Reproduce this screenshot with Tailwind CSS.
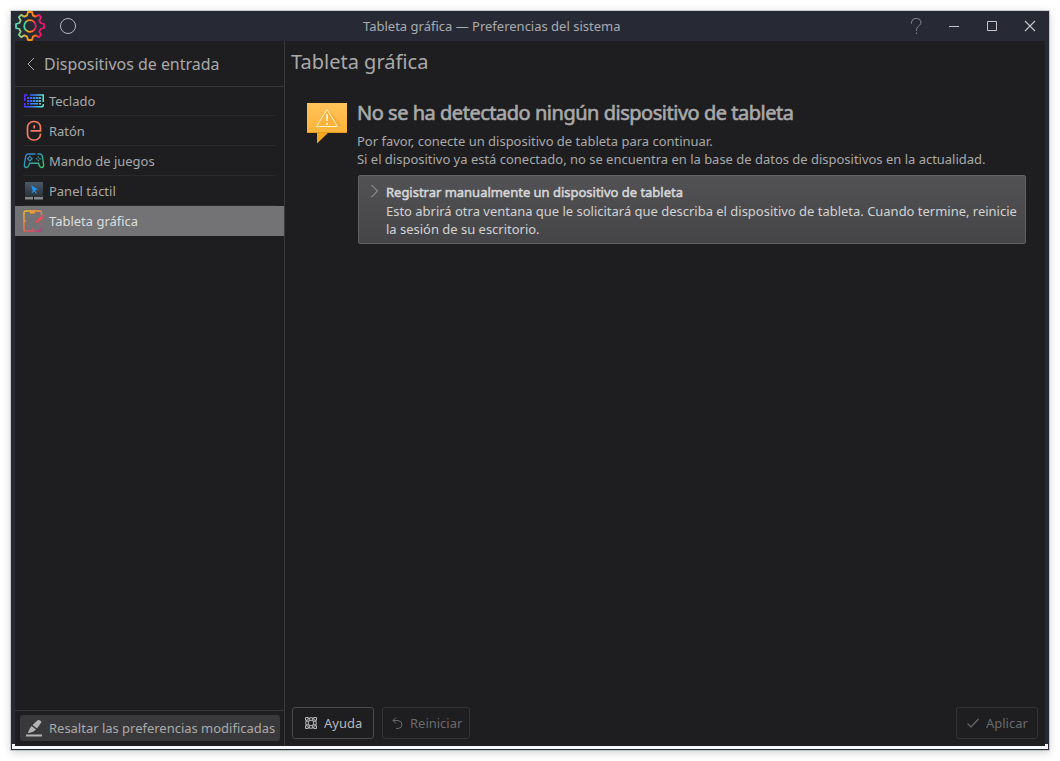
<!DOCTYPE html>
<html lang="es">
<head>
<meta charset="utf-8">
<title>Tableta gráfica — Preferencias del sistema</title>
<script src="https://cdn.jsdelivr.net/npm/@tailwindcss/browser@4"></script>
</head>
<body class="w-[1060px] h-[761px] overflow-hidden bg-white p-[11px] font-['Noto_Sans',sans-serif] text-[12.98px] leading-[18px] text-[#a9a9aa]">
<div class="w-[1038px] h-[739px] flex flex-col bg-[#272a34] shadow-[0_2px_9px_0_rgba(0,0,0,0.2),0_0_0_1px_#d3dcda] whitespace-nowrap">
  <header class="h-[30px] shrink-0 flex items-center">
    <svg class="ml-1 w-[30px] h-[30px]" viewBox="0 0 30 30" fill="none" stroke="url(#gear)" stroke-width="1.8">
      <defs><linearGradient id="gear" gradientUnits="userSpaceOnUse" x1="0" y1="15" x2="30" y2="15"><stop offset="0" stop-color="#35e0c8"/><stop offset=".25" stop-color="#b8c86a"/><stop offset=".45" stop-color="#ff9b10"/><stop offset=".65" stop-color="#ff7b22"/><stop offset=".78" stop-color="#f51c64"/><stop offset="1" stop-color="#f50b75"/></linearGradient>
      <linearGradient id="hub"><stop offset="0" stop-color="#35e0a8"/><stop offset=".35" stop-color="#ff9b10"/><stop offset=".65" stop-color="#ff7b22"/><stop offset="1" stop-color="#f50b75"/></linearGradient></defs>
      <path stroke-linejoin="round" d="M12 4.500 13 1h4l1 3.500q1.500.3 2.600 1.200l3.200-1.800 2.300 2.300-1.800 3.200q.8 1.200 1.200 2.600L29 13v4l-3.500 1q-.4 1.400-1.200 2.600l1.800 3.200-2.300 2.300-3.200-1.800q-1.200.9-2.600 1.200L17 29h-4l-1-3.500q-1.400-.3-2.600-1.200l-3.200 1.800-2.300-2.300 1.800-3.200Q4.900 19.400 4.500 18L1 17v-4l3.500-1q.4-1.400 1.200-2.600L3.900 6.200l2.300-2.300 3.200 1.800Q10.600 4.800 12 4.500z"/>
      <circle cx="15" cy="15" r="5.800" stroke="url(#hub)"/>
    </svg>
    <svg class="ml-[15px] w-4 h-4" viewBox="0 0 16 16" fill="none" stroke="#b4b7be"><circle cx="8" cy="8" r="7.5"/></svg>
    <h1 class="ml-[287px] w-[260px] text-[13px] text-[#a9aab0]">Tableta gráfica — Preferencias del sistema</h1>
    <svg class="ml-auto mr-3 w-[126px] h-[18px]" viewBox="0 0 126 18" fill="none" stroke="#c4c5c8">
      <path stroke="#868891" d="M.5 6.500V5A4.800 4.300 0 0 1 10 5c0 2-1 3-2.500 4.200S5.500 11.500 5.500 14M5.500 15.500v1.500"/>
      <path d="M38 9.500h10M76.500 4.500h9v9h-9z"/><path stroke-width="1.200" d="m114 4 10 10m0-10-10 10"/>
    </svg>
  </header>

  <div class="h-[705px] shrink-0 mx-1 flex bg-[#1e1e20]">
    <aside class="w-[270px] shrink-0 flex flex-col border-r border-[#3a3a3c]">
      <div class="h-[46px] flex items-center border-b border-[#363638] text-[15.95px]">
        <svg class="ml-3 w-2 h-[14px]" viewBox="0 0 8 14" fill="none" stroke="#a9a9aa"><path d="M7 1 1 7l6 6"/></svg>
        <span class="ml-[9px]">Dispositivos de entrada</span>
      </div>
      <nav class="-mt-px">
        <div class="h-[30px] px-2"><div class="h-full flex items-center border-b border-[#29292b]">
          <svg class="w-[22px] h-[22px]" viewBox="0 0 22 22" fill="none" stroke="url(#kb)"><defs><linearGradient id="kb" gradientUnits="userSpaceOnUse" x1="0" y1="9" x2="22" y2="12"><stop stop-color="#5520ff"/><stop offset=".5" stop-color="#3684f5"/><stop offset="1" stop-color="#68ffc2"/></linearGradient></defs>
            <path stroke-width="1.500" d="M4.500 5H1.800v6m0 2v3.800H19q1.200 0 1.200-1.200V14M7 5h13.200v7"/><path stroke-width="2" stroke-dasharray="2.200 .7" d="M4 8h14.500M4 11h14.500"/><path stroke-width="1.600" d="M4 13.800h2m1 0h8m1 0h2"/></svg>
          <span class="ml-1">Teclado</span></div></div>
        <div class="h-[30px] px-2"><div class="h-full flex items-center border-b border-[#29292b]">
          <svg class="w-[22px] h-[22px]" viewBox="0 0 22 22" fill="none" stroke="#f47b61" stroke-width="1.700"><path d="M17.500 11V7.500a6 6 0 0 0-6-6h-1a6 6 0 0 0-6 6v6.500a6 6 0 0 0 6 6h1a6 6 0 0 0 6-6v-.5M7.500 10.800h10.800M11.200 5.200v3.300"/></svg>
          <span class="ml-1">Ratón</span></div></div>
        <div class="h-[30px] px-2"><div class="h-full flex items-center border-b border-[#29292b]">
          <svg class="w-[22px] h-[22px]" viewBox="0 0 22 22" fill="none" stroke="url(#pad)" stroke-width="1.400"><defs><linearGradient id="pad" gradientUnits="userSpaceOnUse" x1="4" y1="2" x2="16" y2="19"><stop stop-color="#407bd0"/><stop offset=".5" stop-color="#329cae"/><stop offset="1" stop-color="#35c874"/></linearGradient></defs>
            <path d="M12.500 4H5Q3 4 2.500 7L1.400 14.500q-.2 3 2 3 1.500 0 2.300-2l1-2.300h8.600l1 2.300q.8 2 2.300 2 2.200 0 2-3L19.500 7Q19 4 17 4h-2.500"/><path stroke-width="1.200" d="m6.800 6.400 2.300 2.300L6.800 11 4.500 8.700zM15.300 6.300v1.500m0 2v1.500M12.800 8.800h1.500m2 0h1.500"/></svg>
          <span class="ml-1">Mando de juegos</span></div></div>
        <div class="h-[30px] px-2"><div class="h-full flex items-center border-b border-[#29292b]">
          <svg class="w-[22px] h-[22px]" viewBox="0 0 22 22"><defs><linearGradient id="tp" x2="0" y2="1"><stop stop-color="#4b5a67"/><stop offset="1" stop-color="#2a3138"/></linearGradient></defs><path fill="url(#tp)" d="M2 2h18v15H2z"/><path fill="#838789" d="M2 17h8v2.500H2zm9 0h9v2.500h-9z"/><path fill="#2492e8" d="m8 5 7 4.500-3 .7 1.800 3-1 .6-1.800-2.500L8.700 14l1-3.500z"/></svg>
          <span class="ml-1">Panel táctil</span></div></div>
        <div class="h-[30px] px-2 flex items-center bg-[#737375] text-[#dededf]">
          <svg class="w-[22px] h-[22px] overflow-visible" viewBox="0 0 22 22" fill="none" stroke="url(#tab)" stroke-width="1.400"><defs><linearGradient id="tab" gradientUnits="userSpaceOnUse" x1="3" y1="1" x2="18" y2="22"><stop stop-color="#f3b92e"/><stop offset=".55" stop-color="#f26a50"/><stop offset="1" stop-color="#b83280"/></linearGradient></defs>
            <path d="M18.500 5V3q0-2-2-2H3Q1 1 1 3v16q0 2 2 2h13.500q2 0 2-2v-6"/><path stroke-width="2" d="M7 2.500h5"/><path d="M1 11h2M9.800 18.500V21"/><path stroke="#fb4754" stroke-width="2.800" d="m14.500 11 4.700-4"/><path stroke="#fb4754" d="m13 12.500 2-2m4.500-4.300L21 5"/></svg>
          <span class="ml-1">Tableta gráfica</span></div>
      </nav>
      <footer class="mt-auto h-[36px] border-t border-[#363638] pt-1 pl-[5px]">
        <div class="w-[260px] h-[26px] rounded-[3px] bg-[#39393b] flex items-center">
          <svg class="ml-[6px] w-4 h-[18px] shrink-0" viewBox="0 0 16 18" fill="#b4b4b5"><path d="M0 15.500h16v2H0zM6.500 6 12 1q2-.5 3.500 2L11 9.500zM5.500 7l4.500 3.500-2.500 2L3 14H2l1-3z"/></svg>
          <span class="ml-[7px]">Resaltar las preferencias modificadas</span>
        </div>
      </footer>
    </aside>

    <main class="flex-1 flex flex-col">
      <h2 class="mt-[7px] ml-[6px] h-7 text-[20px] leading-7">Tableta gráfica</h2>
      <section class="mt-6 ml-[22px] flex">
        <svg class="mt-[3px] w-10 h-[42px] shrink-0" viewBox="0 0 40 42"><defs><linearGradient id="warn" x2="0" y2="1"><stop stop-color="#ffc35a"/><stop offset="1" stop-color="#ffb338"/></linearGradient></defs><path fill="#f3a71d" d="M10 29h12L10 40.500z"/><path fill="url(#warn)" d="M0 0h40v30H0z"/><path fill="#eca735" opacity=".65" d="m20 6 15 16-4 2H11z"/><path fill="#e79a1f" d="M0 29h40v1H0z"/><path fill="#f9b23c" stroke="#fff2c7" d="M20 6.500 30.500 23.500h-21z"/><path stroke="#fff4d6" stroke-width="1.600" d="M20 11v7m0 2v2"/></svg>
        <div class="ml-[10px] w-[669px]">
          <h3 class="pt-px h-6 text-[20px] leading-6 tracking-[-0.48px] [-webkit-text-stroke:0.6px_#a9a9aa]">No se ha detectado ningún dispositivo de tableta</h3>
          <p class="mt-2">Por favor, conecte un dispositivo de tableta para continuar.<br>Si el dispositivo ya está conectado, no se encuentra en la base de datos de dispositivos en la actualidad.</p>
          <div class="mt-[7px] ml-px w-[668px] h-[69px] flex rounded-[2px] border border-[#626264] bg-linear-to-b from-[#525254] to-[#454547] text-[#d3d3d4]">
            <svg class="ml-[12px] mt-2 w-2 h-[14px] shrink-0" viewBox="0 0 8 14" fill="none" stroke="#a9a9aa"><path d="m.5 1 6 6-6 6"/></svg>
            <div class="ml-[7px] pt-[7px]">
              <b class="block h-[19px] font-normal [-webkit-text-stroke:0.5px_#dadadb]">Registrar manualmente un dispositivo de tableta</b>
              <p>Esto abrirá otra ventana que le solicitará que describa el dispositivo de tableta. Cuando termine, reinicie<br>la sesión de su escritorio.</p>
            </div>
          </div>
        </div>
      </section>
      <footer class="mt-auto mb-[7px] mx-[7px] flex">
        <div class="w-[82px] h-[32px] rounded-[3px] border border-[#4b4b4d] flex items-center text-[#b9b9ba]">
          <svg class="ml-3 w-3 h-3" viewBox="0 0 12 12" fill="none" stroke="#b9b9ba"><circle cx="6" cy="6" r="5.300"/><circle cx="6" cy="6" r="2.800"/><path d="M.5 3.500v-3h3m5 0h3v3m0 5v3h-3m-5 0h-3v-3"/><path stroke-width="1.300" d="M1 4.200h2.500M4.200 1v2.500M7.800 1v2.500M11 4.200H8.500M1 7.800h2.500M4.200 11V8.500M7.800 11V8.500M11 7.800H8.500"/></svg>
          <span class="ml-[7px]">Ayuda</span></div>
        <div class="ml-2 w-[88px] h-[32px] rounded-[3px] border border-[#343436] flex items-center text-[#6a6a6b]">
          <svg class="ml-[9px] w-[11px] h-3" viewBox="0 0 11 12" fill="none" stroke="#6a6a6b"><path d="M4 .5 1 3.500l3 3M1 3.500h5q4 .3 4 4t-4 4H4"/></svg>
          <span class="ml-[7px]">Reiniciar</span></div>
        <div class="ml-auto w-[82px] h-[32px] rounded-[3px] border border-[#343436] flex items-center text-[#6a6a6b]">
          <svg class="ml-[10px] w-3 h-3" viewBox="0 0 12 12" fill="none" stroke="#6a6a6b" stroke-width="1.200"><path d="M.5 6.500 4 10l7.500-8"/></svg>
          <span class="ml-[7px]">Aplicar</span></div>
      </footer>
    </main>
  </div>
  <!-- light resize edge wrapping the lower corners -->
  <div class="relative h-[3px] shrink-0 mx-px bg-[#f8f9fc]">
    <i class="absolute left-0 -top-[2px] w-[3px] h-[2px] bg-[#f8f9fc]"></i><i class="absolute right-0 -top-[2px] w-[3px] h-[2px] bg-[#f8f9fc]"></i>
  </div>
</div>
</body>
</html>
